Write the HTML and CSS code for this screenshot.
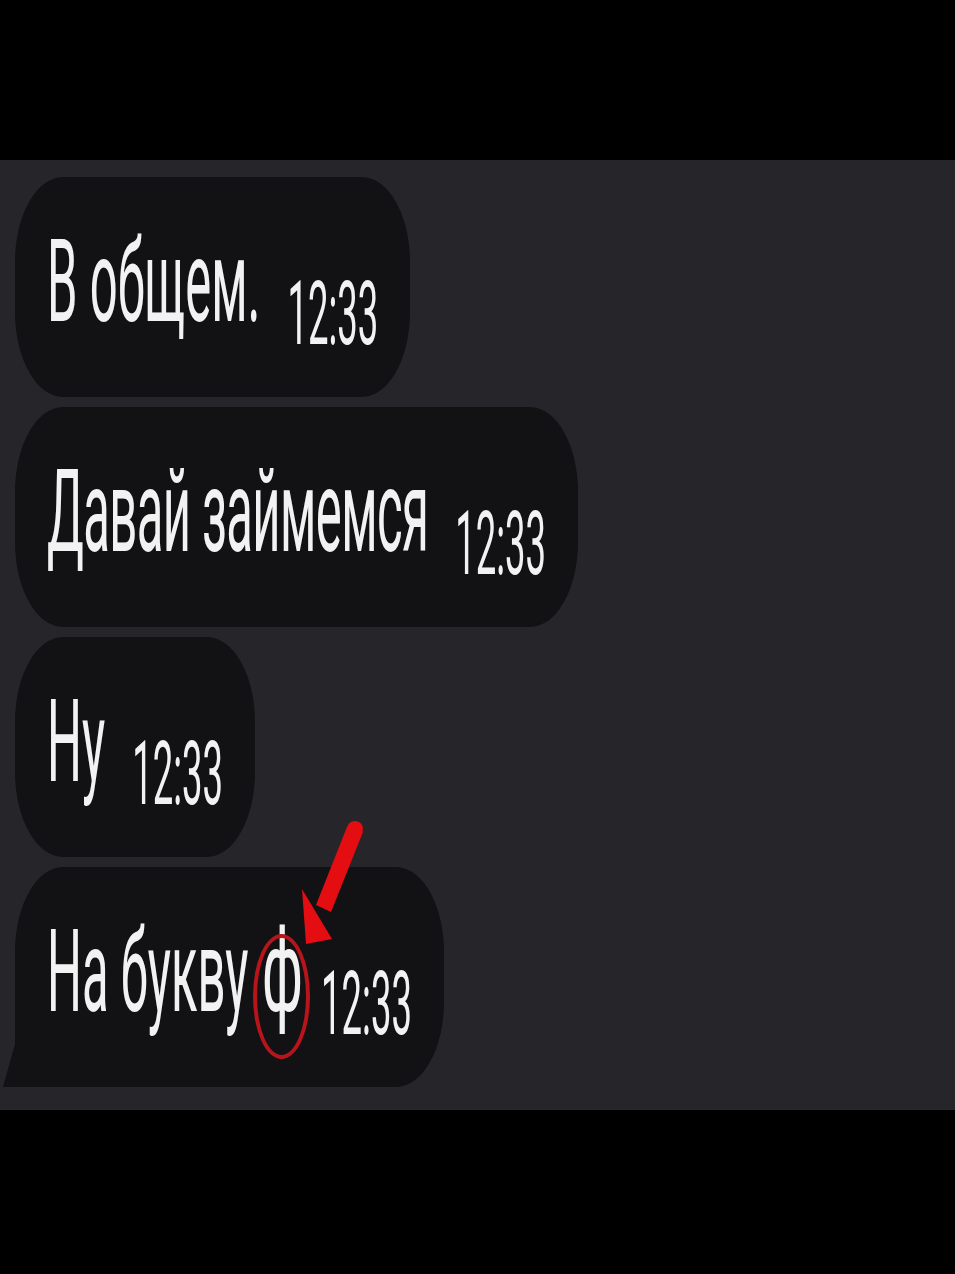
FILE: index.html
```html
<!DOCTYPE html>
<html lang="ru">
<head>
<meta charset="utf-8">
<link rel="stylesheet" href="styles.css">
</head>
<body>
<div class="top-bar"></div>
<main class="chat">
  <div class="bubble">
    <span class="msg">В общем.</span>
    <span class="time">12:33</span>
  </div>
  <div class="bubble">
    <span class="msg msg-tight">Давай займемся</span>
    <span class="time">12:33</span>
  </div>
  <div class="bubble">
    <span class="msg">Ну</span>
    <span class="time">12:33</span>
  </div>
  <div class="bubble bubble-last">
    <span class="msg">На букву<span class="letter">ф</span></span>
    <span class="time">12:33</span>
    <span class="ring"></span>
    <svg class="arrow" width="70" height="130" viewBox="0 0 70 130">
      <polygon points="47,8 63,13 31,93 16,86" fill="#e30d12"/>
      <polygon points="2,70 32,120 6,125" fill="#e30d12"/>
      <circle cx="55" cy="10" r="8" fill="#e30d12"/>
    </svg>
  </div>
</main>
<div class="bottom-bar"></div>
</body>
</html>
```

FILE: styles.css
```css
html, body {
  margin: 0;
  padding: 0;
  background: #000;
}

body {
  width: 955px;
  height: 1274px;
  overflow: hidden;
  font-family: "Roboto", "Noto Sans", sans-serif;
}

.top-bar {
  height: 160px;
  background: #000;
}

.chat {
  height: 950px;
  box-sizing: border-box;
  background: #262529;
  padding: 17px 0 0 15px;
  display: flex;
  flex-direction: column;
  align-items: flex-start;
  gap: 10px;
}

.bubble {
  position: relative;
  display: flex;
  align-items: flex-start;
  gap: 27px;
  height: 220px;
  box-sizing: border-box;
  padding: 48px 32px 0 32px;
  background: #121114;
  border-radius: 48px / 85px;
  color: #f2f2f2;
}

.msg {
  display: inline-block;
  font-size: 49px;
  line-height: 1;
  white-space: nowrap;
  transform: scaleY(2.35);
  transform-origin: top left;
}

.msg-tight {
  letter-spacing: -0.6px;
}

.letter {
  margin-left: 14px;
  margin-right: -4px;
  display: inline-block;
  transform: scaleX(1.15);
  transform-origin: left center;
}

.time {
  display: inline-block;
  margin-top: 46px;
  font-size: 36.5px;
  line-height: 1;
  white-space: nowrap;
  transform: scaleY(2.42);
  transform-origin: top left;
}

.bubble-last {
  border-bottom-left-radius: 0;
}

.bubble-last::before {
  content: "";
  position: absolute;
  left: -12px;
  bottom: 0;
  width: 14px;
  height: 50px;
  background: #121114;
  clip-path: polygon(100% 0, 100% 100%, 0 100%);
}

.ring {
  position: absolute;
  left: 238px;
  top: 67px;
  width: 57px;
  height: 125px;
  box-sizing: border-box;
  border: 4px solid #b8141c;
  border-radius: 50%;
}

.arrow {
  position: absolute;
  left: 285px;
  top: -48px;
}

.bottom-bar {
  height: 164px;
  background: #000;
}
```
